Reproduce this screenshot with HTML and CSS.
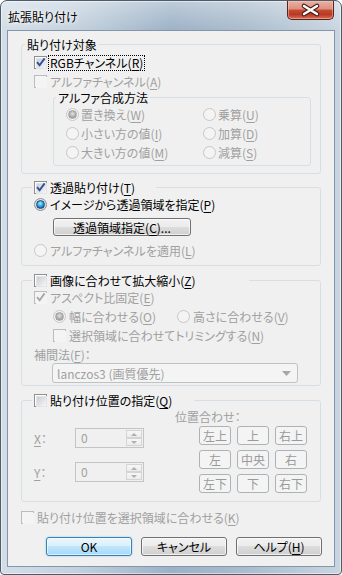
FILE: index.html
```html
<!DOCTYPE html>
<html lang="ja">
	<head>
		<meta charset="UTF-8" />
		<title>拡張貼り付け</title>
		<link rel="stylesheet" href="styles.css">
	</head>
	<body>
		<div class="window">
			<div class="titlebar">
				<span class="title">拡張貼り付け</span>
				<div class="close">
					<svg width="45" height="17" viewBox="0 0 45 17">
						<path d="M16 5 L29 13 M29 5 L16 13" stroke="#4a1d17" stroke-width="4.6" stroke-linecap="round" />
						<path d="M16 5 L29 13 M29 5 L16 13" stroke="#fff" stroke-width="2.4" stroke-linecap="round" />
					</svg>
				</div>
			</div>

			<div class="client">
				<!-- 貼り付け対象 -->
				<fieldset class="group g1">
					<legend class="text-legend">貼り付け対象</legend>
					<div class="row">
						<span class="cb"><svg viewBox="0 0 13 13"><path class="mark" d="M3 6.2 L5.6 9.2 L10.6 2.4" /></svg></span>
						<span class="focus">RGBチャンネル(<u>R</u>)</span>
					</div>
					<div class="row off">
						<span class="cb"></span><span>アルファチャンネル(<u>A</u>)</span>
					</div>
					<fieldset class="group sub">
						<legend class="text-legend">アルファ合成方法</legend>
						<div class="radio-grid off">
							<div class="row"><span class="rb sel"></span><span>置き換え(<u>W</u>)</span></div>
							<div class="row"><span class="rb"></span><span>乗算(<u>U</u>)</span></div>
							<div class="row"><span class="rb"></span><span>小さい方の値(<u>I</u>)</span></div>
							<div class="row"><span class="rb"></span><span>加算(<u>D</u>)</span></div>
							<div class="row"><span class="rb"></span><span>大きい方の値(<u>M</u>)</span></div>
							<div class="row"><span class="rb"></span><span>減算(<u>S</u>)</span></div>
						</div>
					</fieldset>
				</fieldset>

				<!-- 透過貼り付け -->
				<fieldset class="group g2">
					<legend class="check-legend">
						<span class="cb"><svg viewBox="0 0 13 13"><path class="mark" d="M3 6.2 L5.6 9.2 L10.6 2.4" /></svg></span>
						<span>透過貼り付け(<u>T</u>)</span>
					</legend>
					<div class="row">
						<span class="rb sel blue"></span><span>イメージから透過領域を指定(<u>P</u>)</span>
					</div>
					<button class="btn area-btn">透過領域指定(<u>C</u>)...</button>
					<div class="row off alpha-row">
						<span class="rb"></span><span>アルファチャンネルを適用(<u>L</u>)</span>
					</div>
				</fieldset>

				<!-- 画像に合わせて拡大縮小 -->
				<fieldset class="group g3">
					<legend class="check-legend wide3">
						<span class="cb"></span><span>画像に合わせて拡大縮小(<u>Z</u>)</span>
					</legend>
					<div class="row off">
						<span class="cb"><svg viewBox="0 0 13 13"><path class="mark" d="M3 6.2 L5.6 9.2 L10.6 2.4" /></svg></span>
						<span>アスペクト比固定(<u>E</u>)</span>
					</div>
					<div class="row off indent">
						<span class="fit-col"><span class="rb sel"></span><span>幅に合わせる(<u>O</u>)</span></span>
						<span class="rb"></span><span>高さに合わせる(<u>V</u>)</span>
					</div>
					<div class="row off indent">
						<span class="cb"></span><span>選択領域に合わせてトリミングする(<u>N</u>)</span>
					</div>
					<div class="row off short"><span>補間法(<u>F</u>)：</span></div>
					<div class="combo">
						<span>lanczos3 (画質優先)</span>
						<svg width="9" height="5" viewBox="0 0 9 5"><path d="M0 0 H9 L4.5 5 Z" fill="#a7a7a7" /></svg>
					</div>
				</fieldset>

				<!-- 貼り付け位置の指定 -->
				<fieldset class="group g4">
					<legend class="check-legend wide4">
						<span class="cb"></span><span>貼り付け位置の指定(<u>Q</u>)</span>
					</legend>
					<div class="pos">
						<div class="pos-left off">
							<div class="spin-row">
								<span class="spin-label"><u>X</u>：</span>
								<div class="spin">
									<span class="spin-val">0</span>
									<span class="spin-btns">
										<span class="spin-up"><i class="tri-up"></i></span>
										<span class="spin-down"><i class="tri-down"></i></span>
									</span>
								</div>
							</div>
							<div class="spin-row y-row">
								<span class="spin-label"><u>Y</u>：</span>
								<div class="spin">
									<span class="spin-val">0</span>
									<span class="spin-btns">
										<span class="spin-up"><i class="tri-up"></i></span>
										<span class="spin-down"><i class="tri-down"></i></span>
									</span>
								</div>
							</div>
						</div>
						<div class="pos-right">
							<div class="off pos-title">位置合わせ：</div>
							<div class="align-grid">
								<span class="abtn">左上</span>
								<span class="abtn">上</span>
								<span class="abtn">右上</span>
								<span class="abtn">左</span>
								<span class="abtn">中央</span>
								<span class="abtn">右</span>
								<span class="abtn">左下</span>
								<span class="abtn">下</span>
								<span class="abtn">右下</span>
							</div>
						</div>
					</div>
				</fieldset>

				<div class="row off fit-sel">
					<span class="cb"></span><span>貼り付け位置を選択領域に合わせる(<u>K</u>)</span>
				</div>

				<div class="actions">
					<button class="btn default">OK</button>
					<button class="btn">キャンセル</button>
					<button class="btn">ヘルプ(<u>H</u>)</button>
				</div>
			</div>
		</div>
	</body>
</html>
```

FILE: styles.css
```css
* {
	box-sizing: border-box;
}

body {
	margin: 0;
	font-family: "Noto Sans CJK JP", "Noto Sans", sans-serif;
	font-size: 12px;
	line-height: 15px;
	font-feature-settings: "palt";
	color: #000;
	background: #fff;
}

u {
	text-decoration-thickness: 1px;
	text-underline-offset: 2px;
}

/* window frame */

.window {
	width: 342px;
	height: 575px;
	border: 1px solid #4e5b69;
	border-radius: 7px 7px 4px 4px;
	background:
		linear-gradient(to bottom, rgba(255, 255, 255, 0.35), rgba(255, 255, 255, 0) 30px),
		linear-gradient(to right, #d2dde7, #c3d1de 22%, #9cb1c6 50%, #aabccd 72%, #c9d5e1);
	box-shadow: inset 0 0 0 1px rgba(255, 255, 255, 0.5);
	padding: 0 6px 7px;
	display: flex;
	flex-direction: column;
}

.titlebar {
	height: 29px;
	display: flex;
	justify-content: space-between;
	align-items: flex-start;
}

.title {
	padding: 8px 0 0 1px;
	font-size: 12px;
	text-shadow: 0 0 6px #fff, 0 0 3px #fff;
}

.close {
	width: 47px;
	height: 19px;
	margin-right: 1px;
	border: 1px solid #5c2119;
	border-top: none;
	border-radius: 0 0 5px 5px;
	background: linear-gradient(to bottom, #eab0a3 0%, #dc8f7f 45%, #c64a34 50%, #b83a25 75%, #d8705a 100%);
	box-shadow: inset 0 0 0 1px rgba(255, 210, 200, 0.45);
}

.close svg {
	display: block;
}

.client {
	flex: 1;
	border: 1px solid #8497aa;
	background: #f0f0f0;
	display: flex;
	flex-direction: column;
}

/* group boxes */

.group {
	margin: 0 13px;
	padding: 0 0 0 12px;
	border: 1px solid #d5dfe5;
	border-radius: 3px;
	min-width: 0;
}

.text-legend {
	padding: 0 2px;
	margin-left: -9px;
	height: 15px;
}

.check-legend {
	padding: 0 2px;
	margin-left: -2px;
	height: 15px;
	display: flex;
	align-items: center;
	gap: 3px;
}

.g1 {
	margin-top: 6px;
	padding-top: 1px;
	padding-bottom: 7px;
}

.g2 .check-legend {
	padding-right: 21px;
}

.wide3 {
	padding-right: 53px;
}

.wide4 {
	padding-right: 22px;
}

.sub {
	margin: -1px 9px 0 19px;
	padding-bottom: 3px;
}

.sub .text-legend {
	margin-left: -10px;
}

.g2 {
	margin-top: 6px;
	padding-bottom: 5px;
}

.g3 {
	margin-top: 7px;
	padding-bottom: 2px;
}

.g4 {
	margin-top: 7px;
	padding-bottom: 8px;
}

/* rows */

.row {
	height: 19px;
	display: flex;
	align-items: center;
	gap: 3px;
	white-space: nowrap;
}

.row.short {
	height: 18px;
}

.off {
	color: #a0a0a0;
}

.focus {
	outline: 1px dotted #000;
	outline-offset: 0;
	padding: 0 1px;
	margin-left: -1px;
	line-height: 14px;
}

.indent {
	padding-left: 19px;
}

.fit-col {
	width: 121px;
	display: flex;
	align-items: center;
	gap: 3px;
}

.radio-grid {
	display: grid;
	grid-template-columns: 137px 1fr;
}

.radio-grid .row {
	gap: 2px;
}

/* checkbox */

.cb {
	width: 13px;
	height: 13px;
	flex: none;
	border: 1px solid #8e8f8f;
	background: #fff;
	padding: 1px;
	position: relative;
}

.cb::before {
	content: "";
	display: block;
	width: 9px;
	height: 9px;
	background: linear-gradient(135deg, #cbcfd5, #f6f6f6);
	border: 1px solid #e3e4e6;
}

.cb svg {
	position: absolute;
	left: -1px;
	top: -1px;
	width: 13px;
	height: 13px;
}

.mark {
	fill: none;
	stroke: #2f4f9d;
	stroke-width: 1.9;
}

.off .cb {
	border-color: #bcbcbc;
	background: #f4f4f4;
}

.off .cb::before {
	background: #f4f4f4;
	border-color: #f4f4f4;
}

.off .mark {
	stroke: #a8a8a8;
}

/* radio */

.rb {
	width: 13px;
	height: 13px;
	flex: none;
	border-radius: 50%;
	border: 1px solid #8e8f8f;
	background: radial-gradient(circle at 50% 45%, #f8f8f8 30%, #d6d7d9 75%);
	display: flex;
	align-items: center;
	justify-content: center;
}

.off .rb {
	border-color: #c7c7c7;
	background: #f4f4f4;
}

.rb.sel::after {
	content: "";
	width: 7px;
	height: 7px;
	border-radius: 50%;
	background: radial-gradient(circle at 50% 40%, #e2e2e2, #9c9c9c 75%);
	border: 1px solid #a3a3a3;
}

.rb.blue::after {
	background: radial-gradient(circle at 45% 35%, #a6ecff 0, #3fb0e8 40%, #135fa5 80%);
	border-color: #17467c;
}

/* buttons */

.btn {
	font: inherit;
	font-feature-settings: "palt";
	color: #000;
	height: 19px;
	padding: 0;
	border: 1px solid #707070;
	border-radius: 3px;
	background: linear-gradient(to bottom, #f2f2f2 0%, #ebebeb 50%, #dddddd 50%, #cfcfcf 100%);
	box-shadow: inset 0 0 0 1px rgba(255, 255, 255, 0.7);
	line-height: 15px;
}

.area-btn {
	display: block;
	width: 138px;
	margin: 4px 0 0 19px;
	height: 18px;
}

.alpha-row {
	margin-top: 5px;
}

.btn.default {
	border-color: #3c7fb1;
	background: linear-gradient(to bottom, #eaf6fd 0%, #d9f0fc 50%, #bee6fd 50%, #a7d9f5 100%);
	box-shadow: inset 0 0 0 1px rgba(255, 255, 255, 0.6), 0 0 2px #7fc8f0;
}

/* combo */

.combo {
	width: 246px;
	height: 20px;
	margin-left: 18px;
	border: 1px solid #bcc3c7;
	border-radius: 3px;
	background: #f4f4f4;
	color: #a0a0a0;
	display: flex;
	align-items: center;
	justify-content: space-between;
	padding: 0 6px 0 4px;
}

/* position */

.pos {
	display: flex;
}

.pos-left {
	width: 141px;
	padding-top: 20px;
}

.spin-row {
	display: flex;
	align-items: center;
	height: 20px;
}

.y-row {
	margin-top: 14px;
}

.spin-label {
	width: 41px;
}

.spin {
	width: 69px;
	height: 20px;
	border: 1px solid #c4c4c4;
	background: #f0f0f0;
	display: flex;
	justify-content: space-between;
	padding: 1px;
}

.spin-val {
	padding-left: 4px;
	line-height: 16px;
}

.spin-btns {
	width: 16px;
	display: flex;
	flex-direction: column;
	gap: 0;
}

.spin-up,
.spin-down {
	flex: 1;
	border: 1px solid #d4d4d4;
	background: linear-gradient(#f7f7f7, #ececec);
	display: flex;
	align-items: center;
	justify-content: center;
}

.tri-up,
.tri-down {
	width: 0;
	height: 0;
	border-left: 3px solid transparent;
	border-right: 3px solid transparent;
}

.tri-up {
	border-bottom: 3px solid #b0b0b0;
}

.tri-down {
	border-top: 3px solid #b0b0b0;
}

.pos-title {
	margin-top: 1px;
	height: 15px;
}

.align-grid {
	margin: 2px 0 0 24px;
	display: grid;
	grid-template-columns: repeat(3, 32px);
	grid-auto-rows: 19px;
	column-gap: 6px;
	row-gap: 5px;
}

.abtn {
	border: 1px solid #adb2b5;
	border-radius: 3px;
	background: #f4f4f4;
	color: #9a9a9a;
	display: flex;
	align-items: center;
	justify-content: center;
}

/* bottom */

.fit-sel {
	margin: 6px 0 0 13px;
}

.actions {
	margin: 10px 12px 0 0;
	display: flex;
	justify-content: flex-end;
	gap: 9px;
}

.actions .btn {
	width: 86px;
}
```
